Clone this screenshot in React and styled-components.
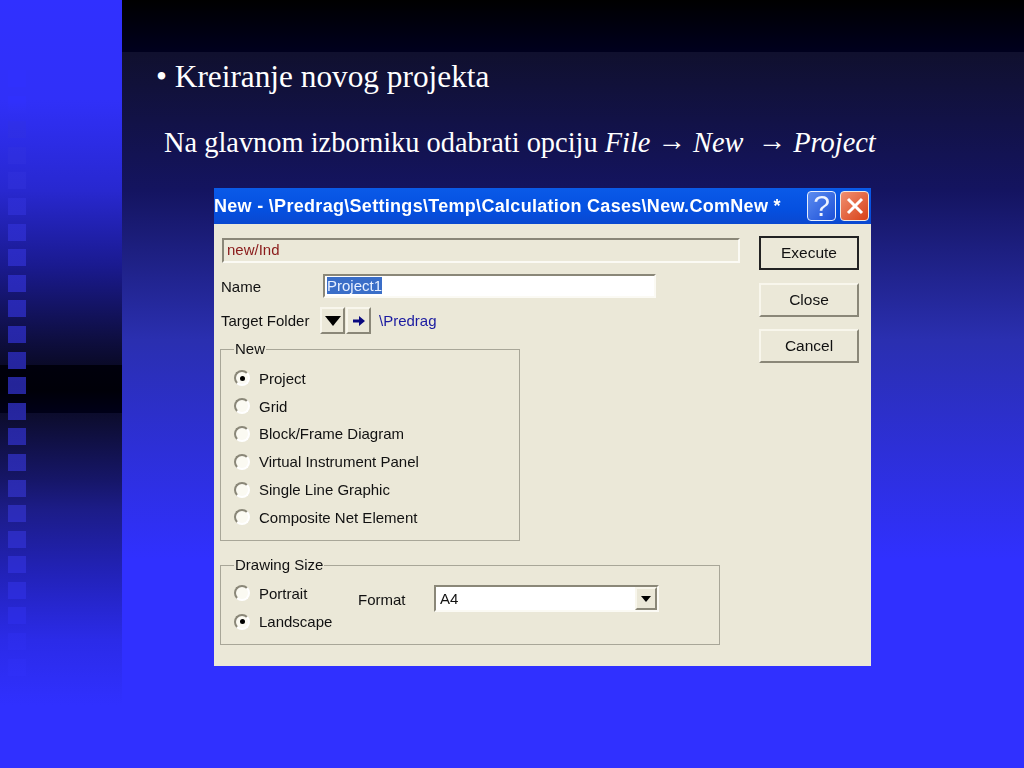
import React from 'react'
import styled, { createGlobalStyle } from 'styled-components'

const GlobalStyle = createGlobalStyle`
  html, body {
    margin: 0;
    padding: 0;
    background: #3030ff;
  }
`

const RADIOS = [
  { label: 'Project', checked: true },
  { label: 'Grid' },
  { label: 'Block/Frame Diagram' },
  { label: 'Virtual Instrument Panel' },
  { label: 'Single Line Graphic' },
  { label: 'Composite Net Element' },
]

const App = () => {
  return (
    <Slide>
      <GlobalStyle />
      <Sidebar>
        {Array.from({ length: 24 }, (_, i) => <Square key={i} />)}
      </Sidebar>
      <Main>
        <Heading>• Kreiranje novog projekta</Heading>
        <Instruction>
          Na glavnom izborniku odabrati opciju <em>File <Arrow>→</Arrow> New &nbsp;<Arrow>→</Arrow> Project</em>
        </Instruction>
        <Dialog>
          <TitleBar>
            <TitleText>New - \Predrag\Settings\Temp\Calculation Cases\New.ComNew *</TitleText>
            <HelpButton>?</HelpButton>
            <CloseButton>
              <svg width="20" height="20" viewBox="0 0 20 20">
                <path d="M3 3 L17 17 M17 3 L3 17" stroke="#fff" strokeWidth="3" fill="none" />
              </svg>
            </CloseButton>
          </TitleBar>
          <Body>
            <Form>
              <StatusField>new/Ind</StatusField>
              <Row $top={11}>
                <RowLabel>Name</RowLabel>
                <NameInput><Selected>Project1</Selected></NameInput>
              </Row>
              <Row $top={9}>
                <RowLabel>Target Folder</RowLabel>
                <FolderButtons>
                  <SmallButton>
                    <svg width="16" height="10" viewBox="0 0 16 10"><path d="M0 0 H16 L8 10 Z" fill="#000" /></svg>
                  </SmallButton>
                  <SmallButton>
                    <svg width="12" height="10" viewBox="0 0 12 10"><path d="M0 3.4 H6 V0 L12 5 L6 10 V6.6 H0 Z" fill="#0a0a80" /></svg>
                  </SmallButton>
                </FolderButtons>
                <FolderPath>\Predrag</FolderPath>
              </Row>
              <Group $width={300} $height={201} $top={6}>
                <Legend>New</Legend>
                <RadioList>
                  {RADIOS.map((r) => (
                    <RadioRow key={r.label}>
                      <Radio $checked={r.checked} />
                      {r.label}
                    </RadioRow>
                  ))}
                </RadioList>
              </Group>
              <Group $width={500} $height={89} $top={15}>
                <Legend>Drawing Size</Legend>
                <SizeRow>
                  <SizeRadios>
                    <RadioRow><Radio />Portrait</RadioRow>
                    <RadioRow><Radio $checked />Landscape</RadioRow>
                  </SizeRadios>
                  <FormatLabel>Format</FormatLabel>
                  <Select>
                    A4
                    <SelectArrow>
                      <svg width="10" height="6" viewBox="0 0 10 6"><path d="M0 0 H10 L5 6 Z" fill="#000" /></svg>
                    </SelectArrow>
                  </Select>
                </SizeRow>
              </Group>
            </Form>
            <Actions>
              <ActionButton $primary>Execute</ActionButton>
              <ActionButton>Close</ActionButton>
              <ActionButton>Cancel</ActionButton>
            </Actions>
          </Body>
        </Dialog>
      </Main>
    </Slide>
  )
}

export default App

const Slide = styled.div`
  display: flex;
  width: 1024px;
  height: 768px;
  overflow: hidden;
`

const Sidebar = styled.div`
  width: 122px;
  height: 768px;
  box-sizing: border-box;
  padding: 70px 0 0 8px;
  display: flex;
  flex-direction: column;
  gap: 8.6px;
  background: linear-gradient(
    to bottom,
    #3030ff 0,
    #3030f8 100px,
    #2828d0 190px,
    #1a1a90 265px,
    #0e0e40 340px,
    #0a0a28 365px,
    #00000c 365px,
    #000008 390px,
    #000018 413px,
    #0c0c2c 413px,
    #161668 480px,
    #1c1c88 510px,
    #2222b8 573px,
    #2b2be8 640px,
    #3030ff 705px
  );
`

const Square = styled.div`
  flex: none;
  width: 18px;
  height: 17px;
  background: linear-gradient(
    to bottom,
    #3030fc 100px,
    #2f2fe8 125px,
    #2b2bc4 250px,
    #242498 385px,
    #2c2cb4 500px,
    #2c2ce8 630px,
    #3030fc 690px
  ) fixed;
`

const Main = styled.div`
  width: 902px;
  height: 768px;
  box-sizing: border-box;
  padding-top: 59px;
  font-family: "Liberation Serif", serif;
  color: #fff;
  background: linear-gradient(
    to bottom,
    #000 0,
    #00001e 52px,
    #10102e 52px,
    #141460 190px,
    #2a2fb0 340px,
    #3030ff 560px
  );
`

const Heading = styled.div`
  margin-left: 34px;
  font-size: 31.3px;
  line-height: 36px;
`

const Instruction = styled.div`
  margin: 30px 0 0 42px;
  font-size: 28.4px;
  line-height: 36px;
  white-space: nowrap;
`

const Arrow = styled.span`
  vertical-align: 2px;
  line-height: 1;
`

const Dialog = styled.div`
  width: 657px;
  height: 478px;
  margin: 27px 0 0 92px;
  background: #ebe8d8;
  font-family: "Liberation Sans", sans-serif;
  color: #111;
  filter: blur(0.4px);
`

const TitleBar = styled.div`
  height: 36px;
  display: flex;
  align-items: center;
  padding-right: 2px;
  background: linear-gradient(to bottom, #0a5ae8 0, #0550e0 60%, #0a48d0 100%);
`

const TitleText = styled.div`
  flex: 1;
  white-space: nowrap;
  color: #fff;
  font-family: "Liberation Sans", sans-serif;
  font-weight: 700;
  font-size: 18px;
  letter-spacing: 0.3px;
`

const HelpButton = styled.div`
  width: 29px;
  height: 30px;
  box-sizing: border-box;
  border: 1.5px solid #e8eefc;
  border-radius: 4px;
  background: linear-gradient(135deg, #5c8cf0, #1c50d8);
  color: #eef3ff;
  font-size: 30px;
  line-height: 27px;
  text-align: center;
`

const CloseButton = styled.div`
  width: 29px;
  height: 30px;
  margin-left: 4px;
  box-sizing: border-box;
  border: 1.5px solid #f0e8e0;
  border-radius: 4px;
  background: linear-gradient(135deg, #f09070, #d84018);
  display: flex;
  align-items: center;
  justify-content: center;
`

const Body = styled.div`
  display: flex;
  padding-left: 6px;
`

const Form = styled.div`
  width: 539px;
  padding-top: 14px;
  font-size: 15px;
`

const StatusField = styled.div`
  width: 518px;
  height: 25px;
  margin-left: 2px;
  padding-left: 3px;
  box-sizing: border-box;
  border: 2px solid;
  border-color: #8a8778 #fbfaf4 #fbfaf4 #8a8778;
  color: #8a1a1a;
  line-height: 20px;
`

const Row = styled.div`
  display: flex;
  align-items: center;
  margin-top: ${(p) => p.$top}px;
  padding-left: 1px;
`

const RowLabel = styled.div`
  width: 99px;
  flex: none;
`

const NameInput = styled.div`
  width: 333px;
  height: 24px;
  margin-left: 3px;
  padding-left: 2px;
  box-sizing: border-box;
  border: 2px solid;
  border-color: #8a8778 #fbfaf4 #fbfaf4 #8a8778;
  background: #fff;
  line-height: 20px;
`

const Selected = styled.span`
  background: #3a6ec8;
  color: #e8f0ff;
`

const FolderButtons = styled.div`
  display: flex;
  gap: 1px;
`

const SmallButton = styled.div`
  width: 25px;
  height: 27px;
  box-sizing: border-box;
  border: 2px solid;
  border-color: #f8f6ec #8a8778 #8a8778 #f8f6ec;
  display: flex;
  align-items: center;
  justify-content: center;
`

const FolderPath = styled.div`
  margin-left: 8px;
  color: #1a1aa0;
`

const Group = styled.fieldset`
  width: ${(p) => p.$width}px;
  height: ${(p) => p.$height}px;
  margin: ${(p) => p.$top}px 0 0;
  padding: 0 0 0 13px;
  box-sizing: border-box;
  border: 1.5px solid #a8a698;
`

const Legend = styled.legend`
  padding: 0 1px;
  line-height: 18px;
`

const RadioList = styled.div`
  display: grid;
  grid-auto-rows: 27.8px;
  margin-top: 6.5px;
`

const RadioRow = styled.div`
  display: flex;
  align-items: center;
  gap: 9px;
  white-space: nowrap;
`

const Radio = styled.span`
  flex: none;
  position: relative;
  width: 16px;
  height: 16px;
  box-sizing: border-box;
  border-radius: 50%;
  border: 2px solid;
  border-color: #8a8778 #fff #fff #8a8778;
  background: #fbfaf2;

  &::after {
    content: '';
    display: ${(p) => (p.$checked ? 'block' : 'none')};
    position: absolute;
    left: 3.5px;
    top: 3.5px;
    width: 5px;
    height: 5px;
    border-radius: 50%;
    background: #000;
  }
`

const SizeRow = styled.div`
  display: flex;
  align-items: flex-start;
  margin-top: 5px;
`

const SizeRadios = styled.div`
  display: grid;
  grid-auto-rows: 28.5px;
  width: 124px;
  flex: none;
`

const FormatLabel = styled.div`
  width: 76px;
  flex: none;
  margin-top: 12px;
`

const Select = styled.div`
  position: relative;
  width: 225px;
  height: 27px;
  margin-top: 6px;
  padding-left: 4px;
  box-sizing: border-box;
  border: 2px solid;
  border-color: #8a8778 #fbfaf4 #fbfaf4 #8a8778;
  background: #fff;
  line-height: 23px;
`

const SelectArrow = styled.div`
  position: absolute;
  top: 0;
  right: 0;
  width: 22px;
  height: 23px;
  box-sizing: border-box;
  border: 2px solid;
  border-color: #f8f6ec #8a8778 #8a8778 #f8f6ec;
  background: #ebe8d8;
  display: flex;
  align-items: center;
  justify-content: center;
`

const Actions = styled.div`
  display: flex;
  flex-direction: column;
  gap: 12.5px;
  padding-top: 12px;
`

const ActionButton = styled.div`
  width: 100px;
  height: 34px;
  box-sizing: border-box;
  border: 2px solid;
  border-color: ${(p) => (p.$primary ? '#222' : '#f8f6ec #8a8778 #8a8778 #f8f6ec')};
  font-size: 15.5px;
  display: flex;
  align-items: center;
  justify-content: center;
`
